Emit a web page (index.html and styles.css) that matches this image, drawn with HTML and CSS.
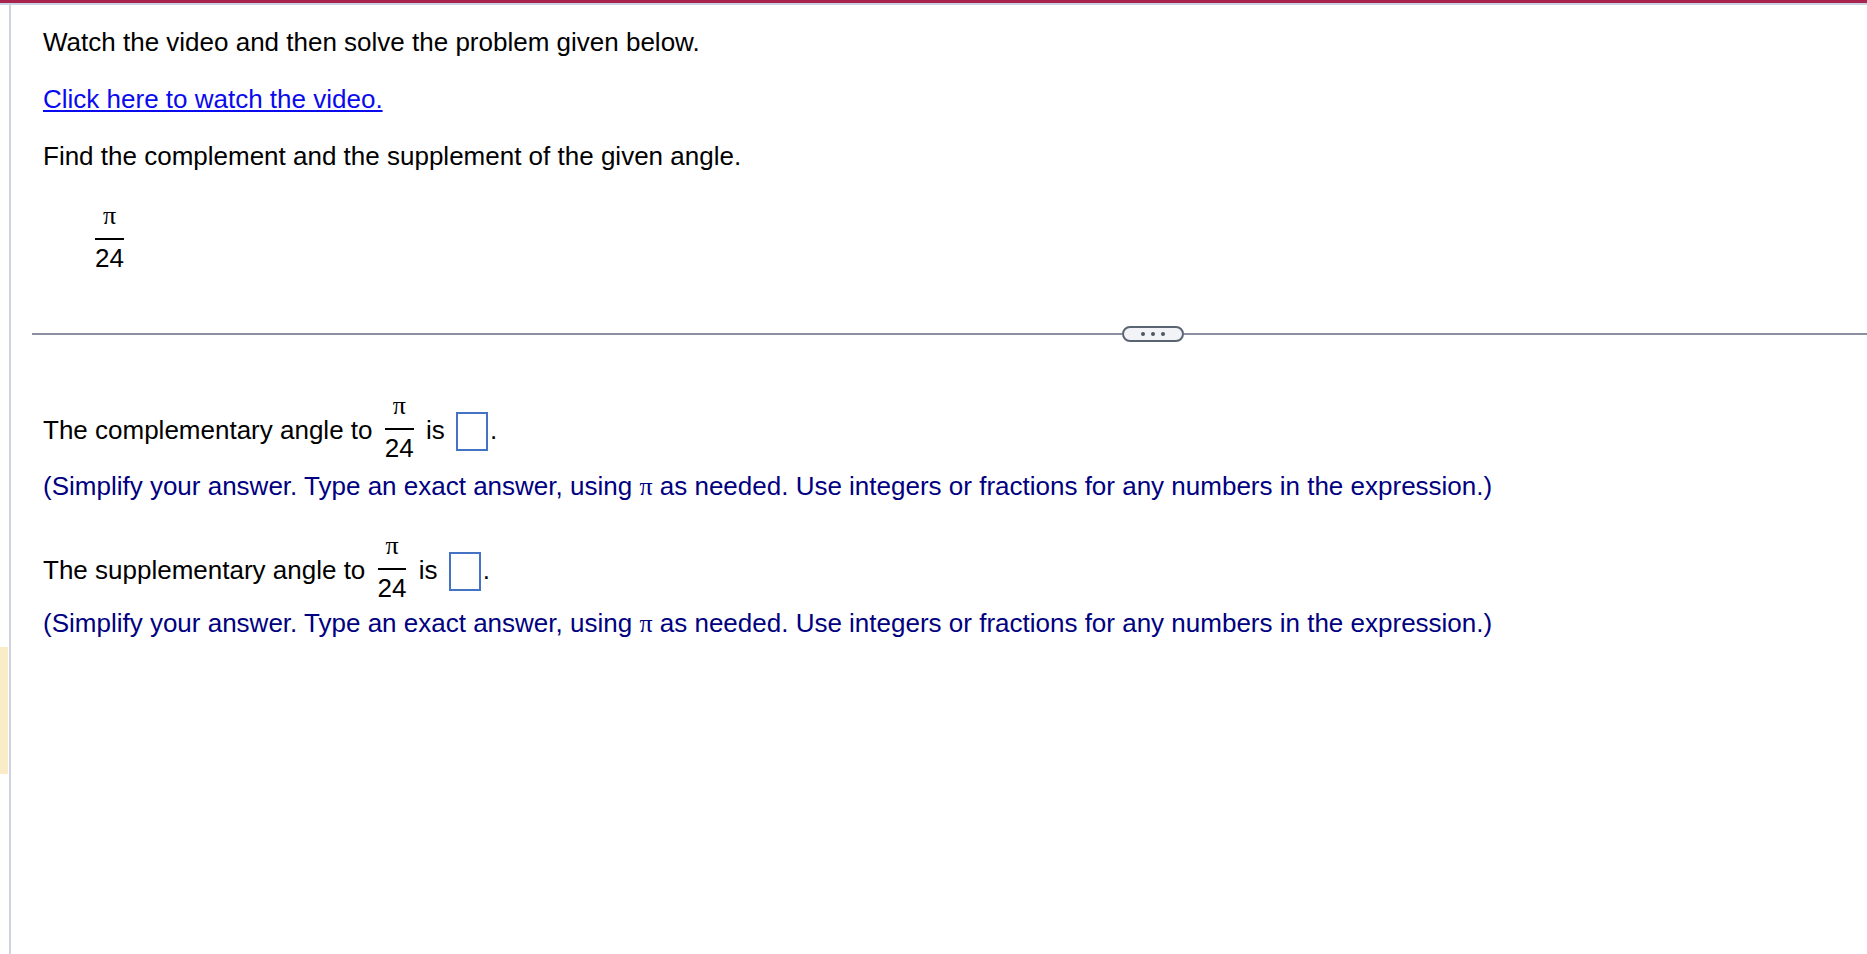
FILE: index.html
```html
<!DOCTYPE html>
<html>
<head>
<meta charset="utf-8">
<link rel="stylesheet" href="styles.css">
</head>
<body>
<div class="topbar"></div>
<div class="page">
  <div class="gutter"><div class="marker"></div></div>
  <div class="main">
    <p class="line">Watch the video and then solve the problem given below.</p>
    <p class="line"><a class="link" href="#">Click here to watch the video.</a></p>
    <p class="line">Find the complement and the supplement of the given angle.</p>
    <div class="display-frac">
      <span class="frac"><span class="num">π</span><span class="bar"></span><span class="den">24</span></span>
    </div>
    <div class="separator">
      <div class="sep-line sep-left"></div>
      <div class="more"><span class="dot"></span><span class="dot"></span><span class="dot"></span></div>
      <div class="sep-line sep-right"></div>
    </div>
    <p class="answer answer-first">The complementary angle to <span class="frac inline"><span class="num">π</span><span class="bar"></span><span class="den">24</span></span> is <span class="box"></span>.</p>
    <p class="hint hint-first">(Simplify your answer. Type an exact answer, using <span class="pi">π</span> as needed. Use integers or fractions for any numbers in the expression.)</p>
    <p class="answer answer-second">The supplementary angle to <span class="frac inline"><span class="num">π</span><span class="bar"></span><span class="den">24</span></span> is <span class="box"></span>.</p>
    <p class="hint hint-second">(Simplify your answer. Type an exact answer, using <span class="pi">π</span> as needed. Use integers or fractions for any numbers in the expression.)</p>
  </div>
</div>
</body>
</html>
```
FILE: styles.css
```css
html, body {
  margin: 0;
  padding: 0;
  background: #ffffff;
  overflow: hidden;
}
body {
  font-family: "Liberation Sans", Arial, sans-serif;
  font-size: 26px;
  color: #000000;
}
.topbar {
  height: 3px;
  background: #a8244f;
  border-bottom: 2px solid #c9d3e3;
}
.page {
  display: flex;
  min-height: calc(100vh - 5px);
}
.gutter {
  width: 9px;
  flex: none;
}
.marker {
  width: 8px;
  height: 127px;
  margin-top: 642px;
  background: #f9ecc6;
}
.main {
  flex: 1;
  border-left: 2px solid #cfd3e0;
  padding: 23px 0 0 32px;
}
.line {
  margin: 0 0 29px 0;
  line-height: 28px;
}
.link {
  color: #0a0aee;
  text-decoration: underline;
}
.display-frac {
  margin: 30px 0 0 50px;
}
.frac {
  display: inline-flex;
  flex-direction: column;
  align-items: center;
  padding: 0 2px;
}
.frac .num {
  font-family: "Liberation Serif", "Times New Roman", serif;
  line-height: 28px;
}
.frac .bar {
  align-self: stretch;
  height: 2px;
  margin-top: 8px;
  background: #000000;
}
.frac .den {
  line-height: 28px;
  margin-top: 4px;
}
.frac.inline {
  vertical-align: 25px;
  margin: 0 3px;
}
.separator {
  display: flex;
  align-items: center;
  margin: 54px 0 0 -11px;
  height: 16px;
}
.sep-line {
  height: 2px;
  background: #8b91a1;
}
.sep-left {
  width: 1090px;
  flex: none;
}
.sep-right {
  flex: 1;
}
.more {
  box-sizing: border-box;
  width: 62px;
  height: 16px;
  border: 2px solid #5b6472;
  border-radius: 8px;
  background: #f1f3f6;
  display: flex;
  align-items: center;
  justify-content: center;
  gap: 6px;
}
.dot {
  width: 4px;
  height: 4px;
  border-radius: 50%;
  background: #4f5663;
}
.answer {
  margin: 0;
  line-height: 28px;
}
.answer-first {
  margin-top: 50px;
}
.answer-second {
  margin-top: 31px;
}
.box {
  display: inline-block;
  box-sizing: border-box;
  width: 32px;
  height: 39px;
  border: 2px solid #4472c4;
  vertical-align: -12px;
  margin-left: 4px;
  margin-right: 2px;
}
.hint {
  margin: 0;
  line-height: 28px;
  color: #000080;
}
.hint-first {
  margin-top: 10px;
}
.hint-second {
  margin-top: 7px;
}
.pi {
  font-family: "Liberation Serif", "Times New Roman", serif;
}
```
